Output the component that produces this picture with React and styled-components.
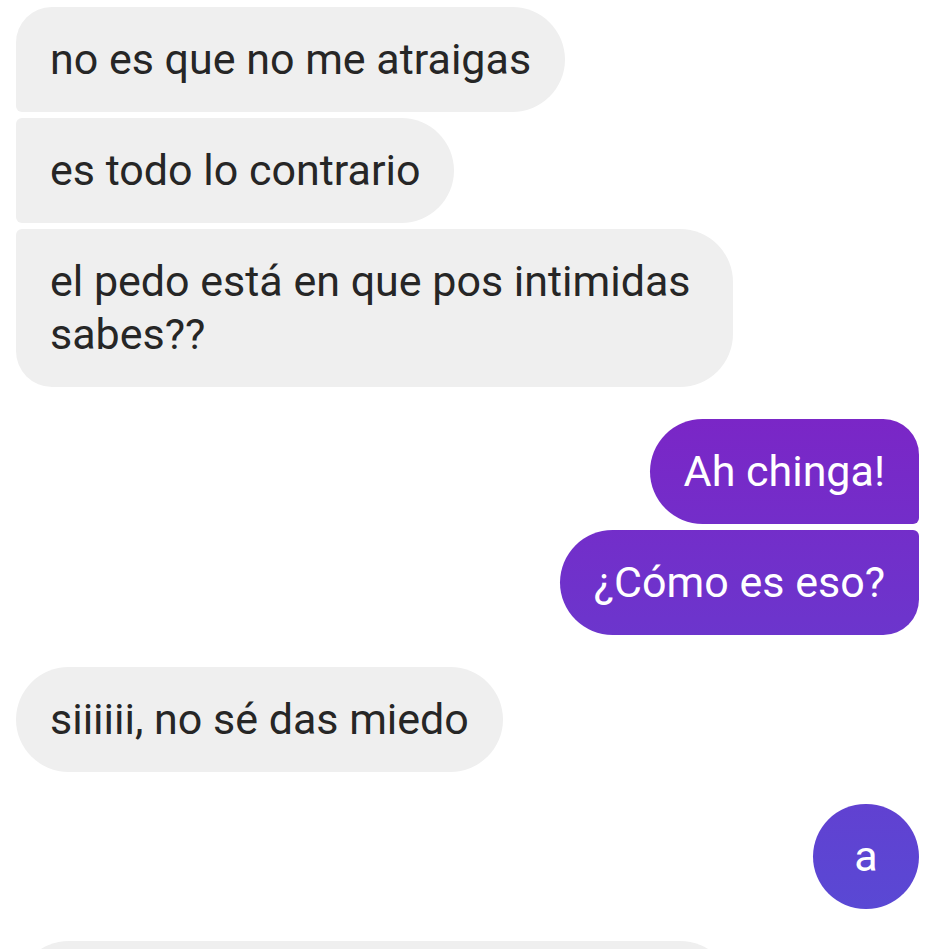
import styled, { createGlobalStyle, css } from "styled-components";

const GlobalStyle = createGlobalStyle`
    html, body {
        margin: 0;
        padding: 0;
        background: #fff;
        overflow: hidden;
    }
`;

const messages = [
    { out: false, lines: ["no es que no me atraigas", "es todo lo contrario", "el pedo está en que pos intimidas sabes??"] },
    { out: true, lines: ["Ah chinga!", "¿Cómo es eso?"] },
    { out: false, lines: ["siiiiii, no sé das miedo"] },
    { out: true, lines: ["a"] },
    { out: false, lines: ["jajaja no inventes, si soy bien tranquilo"] },
];

export default function App() {
    return (
        <>
            <GlobalStyle />
            <Screen>
                <Thread>
                    {messages.map((group, i) => (
                        <Group key={i} $out={group.out}>
                            {group.lines.map((text, j) => {
                                let pos = "middle";
                                if (group.lines.length === 1) pos = "single";
                                else if (j === 0) pos = "first";
                                else if (j === group.lines.length - 1) pos = "last";
                                return (
                                    <Bubble key={j} $out={group.out} $pos={pos} $wide={text.length > 30}>
                                        {text}
                                    </Bubble>
                                );
                            })}
                        </Group>
                    ))}
                </Thread>
            </Screen>
        </>
    );
}

const PILL = "53px";
const EDGE = "36px";
const JOIN = "6px";

const corners = (out, pos) => {
    const top = pos === "single" || pos === "first" ? EDGE : JOIN;
    const bottom = pos === "single" || pos === "last" ? EDGE : JOIN;
    if (pos === "single") return `border-radius: ${PILL};`;
    return out
        ? `border-radius: ${PILL} ${top} ${bottom} ${PILL};`
        : `border-radius: ${top} ${PILL} ${PILL} ${bottom};`;
};

const Screen = styled.main`
    height: 100vh;
    overflow: hidden;
    background: #fff;
    font-family: Roboto, "Noto Sans", sans-serif;
`;

const Thread = styled.div`
    display: flex;
    flex-direction: column;
    gap: 32px;
    padding: 7px 23px 0 16px;
`;

const Group = styled.div`
    display: flex;
    flex-direction: column;
    gap: 6px;
    align-items: ${p => (p.$out ? "flex-end" : "flex-start")};
`;

const Bubble = styled.div`
    box-sizing: border-box;
    min-width: 106px;
    max-width: 717px;
    padding: 26px 34px;
    font-size: 43px;
    line-height: 53px;
    text-align: center;
    white-space: pre-wrap;
    ${p => corners(p.$out, p.$pos)}
    ${p => p.$wide && css`
        text-align: left;
    `}
    ${p => p.$out
        ? css`
            color: #fff;
            background: linear-gradient(180deg, #9609bb 0px, #574bd5 949px);
            background-attachment: fixed;
        `
        : css`
            color: #262626;
            background: #efefef;
        `}
`;
